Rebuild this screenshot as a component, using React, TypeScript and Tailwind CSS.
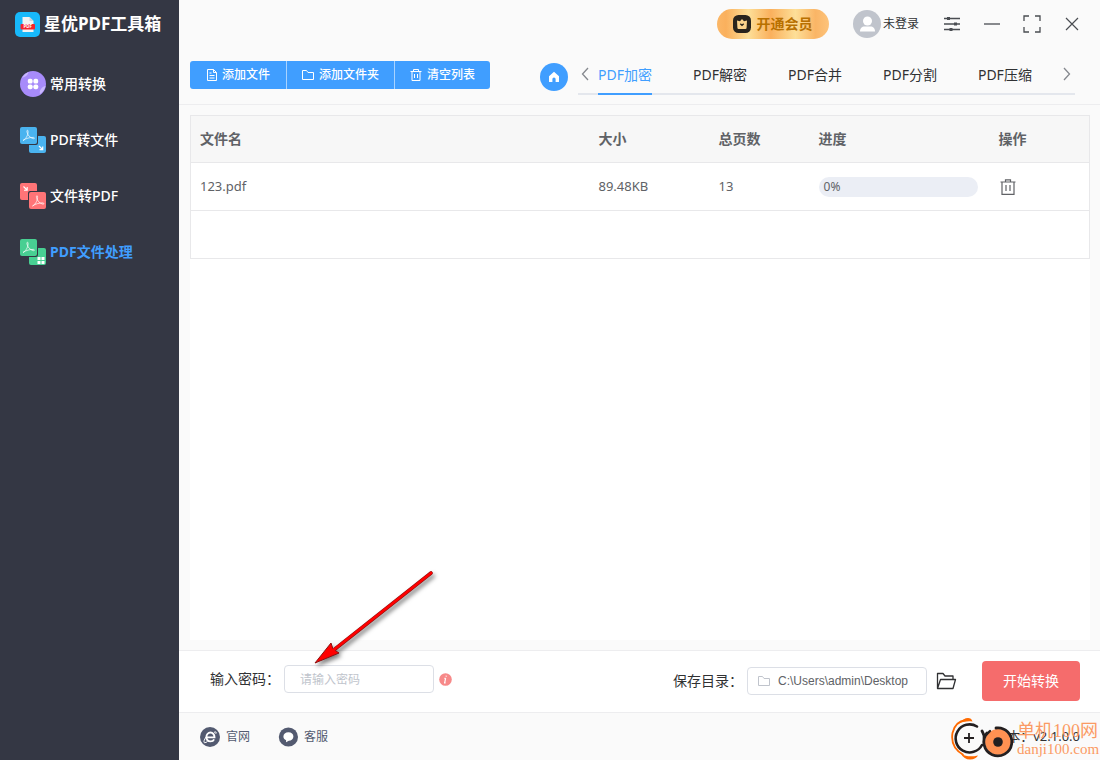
import type { ReactNode } from "react";

const tabs = ["PDF加密", "PDF解密", "PDF合并", "PDF分割", "PDF压缩"];
const files = [{ name: "123.pdf", size: "89.48KB", pages: 13, progress: 0 }];

const ACROBAT = "M0 10.5C3.500 8.500 5.500 4 5 .8 4.600-.4 3.600.4 4 2c.6 3 3 6 6.500 6.700 1.200.2 1.200-1.200 0-1.300C7 7.300 3 8.300 0 10.500z";

function App() {
  return (
    <div className="flex min-h-screen bg-[#fafafa] font-['Noto_Sans','Noto_Sans_CJK_SC',sans-serif] text-sm text-[#303133]">
      <Sidebar />
      <main className="relative flex min-w-0 flex-1 flex-col">
        <TitleBar />
        <Toolbar />
        <section className="flex flex-1 flex-col py-[10px] pr-[10px] pl-[11px]">
          <div className="flex-1 bg-white">
            <FileTable />
          </div>
        </section>
        <OptionsBar />
        <Footer />
        <Arrow />
      </main>
    </div>
  );
}

function Sidebar() {
  return (
    <aside className="w-[179px] shrink-0 bg-[#343744] text-white">
      <div className="flex h-12 items-center gap-1 pl-[15px]">
        <LogoIcon />
        <h1 className="whitespace-nowrap text-[17px] font-bold leading-6">星优PDF工具箱</h1>
      </div>
      <nav className="flex flex-col pt-2">
        <MenuItem icon={<CommonIcon />}>常用转换</MenuItem>
        <MenuItem icon={<PdfToFileIcon />}>PDF转文件</MenuItem>
        <MenuItem icon={<FileToPdfIcon />}>文件转PDF</MenuItem>
        <MenuItem icon={<PdfProcessIcon />} active>PDF文件处理</MenuItem>
      </nav>
    </aside>
  );
}

const MenuItem = ({ icon, active, children }: { icon: ReactNode; active?: boolean; children: ReactNode }) => {
  return (
    <a href="#" className={active ? "flex h-14 items-center gap-1 pl-5 font-bold text-[#409eff]" : "flex h-14 items-center gap-1 pl-5 font-medium"}>
      {icon}
      <span>{children}</span>
    </a>
  );
};

function TitleBar() {
  return (
    <header className="flex h-[47px] items-center justify-end pr-[19px]">
      <button className="flex h-[30px] w-28 items-center justify-center gap-[5px] rounded-full bg-[linear-gradient(90deg,#fbb767,#fab05d_8%,#fddf98_28%,#fab05d_48%,#fddf98_70%,#fab566_88%,#fdc37a)] text-sm font-bold text-[#b87000]">
        <VipIcon />
        开通会员
      </button>
      <button className="ml-6 flex items-center gap-[2px] text-xs">
        <AvatarIcon />
        未登录
      </button>
      <div className="ml-6 flex items-center gap-[22px] text-[#4a4d52]">
        <button aria-label="设置">
          <svg width="18" height="18" viewBox="0 0 18 18" fill="none" stroke="currentColor" strokeWidth="1.4">
            <path d="M1 3.500h16M1 9h16M1 14.500h16" />
            <path d="M5.500 2v3M12.500 7.500v3M8 13v3" strokeWidth="3" />
          </svg>
        </button>
        <button aria-label="最小化">
          <svg width="18" height="18" viewBox="0 0 18 18" stroke="currentColor" strokeWidth="1.3"><path d="M1 9h16" /></svg>
        </button>
        <button aria-label="最大化">
          <svg width="18" height="18" viewBox="0 0 18 18" fill="none" stroke="currentColor" strokeWidth="1.3">
            <path d="M1 6V1h5M12 1h5v5M17 12v5h-5M6 17H1v-5" />
          </svg>
        </button>
        <button aria-label="关闭">
          <svg width="18" height="18" viewBox="0 0 18 18" stroke="currentColor" strokeWidth="1.2"><path d="M3 3l12 12M15 3L3 15" /></svg>
        </button>
      </div>
    </header>
  );
}

function Toolbar() {
  return (
    <div className="flex items-center border-b border-[#ededef] pt-2 pb-[9px] pl-[11px]">
      <div className="flex h-7 shrink-0 divide-x divide-[#a9d3ff] overflow-hidden rounded-[3px] bg-[#409eff] text-xs font-medium text-white">
        <button className="flex items-center gap-1 px-4">
          <svg width="12" height="12" viewBox="0 0 12 12" fill="none" stroke="currentColor">
            <path d="M1.5.5h6l3 3v8h-9zM7.5.5v3h3M3.500 4h2M3.500 6.500h5M3.500 9h5" />
          </svg>
          添加文件
        </button>
        <button className="flex items-center gap-[5px] px-[15px]">
          <svg width="12" height="12" viewBox="0 0 12 12" fill="none" stroke="currentColor">
            <path d="M.5 1.500h4l1.500 2h5.500v7H.5z" />
          </svg>
          添加文件夹
        </button>
        <button className="flex items-center gap-[5px] px-[15px]">
          <svg width="12" height="12" viewBox="0 0 12 12" fill="none" stroke="currentColor">
            <path d="M.5 2.500h11M3.500 2.500v-2h5v2M2 2.500v9h8v-9M4.500 5v4M7.500 5v4" />
          </svg>
          清空列表
        </button>
      </div>
      <button aria-label="首页" className="mr-[10px] mb-1 ml-[50px] flex size-7 shrink-0 items-center justify-center self-end rounded-full bg-[#409eff] text-white">
        <svg width="12" height="12" viewBox="0 0 12 12" fill="currentColor">
          <path d="M6 .8l5 4.400v5.300a.6.600 0 0 1-.6.600H7.600V8a1.600 1.600 0 0 0-3.200 0v3.100H1.600A.6.600 0 0 1 1 10.500V5.200z" />
        </svg>
      </button>
      <div className="mr-[25px] flex h-10 min-w-0 flex-1 border-b-2 border-[#e4e7ed]">
        <button aria-label="上一页" className="w-5 shrink-0 text-[#85888e]">
          <svg width="14" height="14" viewBox="0 0 14 14" fill="none" stroke="currentColor" strokeWidth="1.3"><path d="M10 1L4.500 7l5.500 6" /></svg>
        </button>
        <nav className="-mb-[2px] flex min-w-0 flex-1 gap-[41px] overflow-hidden">
          {tabs.map((tab, index) => (
            <a
              key={tab}
              href="#"
              className={index === 0
                ? "shrink-0 border-b-2 border-[#409eff] leading-10 text-[#409eff]"
                : "shrink-0 leading-10"}
            >
              {tab}
            </a>
          ))}
        </nav>
        <button aria-label="下一页" className="w-5 shrink-0 text-[#85888e]">
          <svg width="20" height="14" viewBox="0 0 20 14" fill="none" stroke="currentColor" strokeWidth="1.3"><path d="M9 1l5.500 6L9 13" /></svg>
        </button>
      </div>
    </div>
  );
}

function FileTable() {
  return (
    <table className="w-full table-fixed border-collapse border border-[#e8e8ea] text-left text-[#606266]">
      <thead>
        <tr className="h-[47px] border-b border-[#e8e8ea] bg-[#f7f7f7]">
          <th className="pl-[9px] font-bold">文件名</th>
          <th className="w-[120px] pl-[9px] font-bold">大小</th>
          <th className="w-[100px] pl-[9px] font-bold">总页数</th>
          <th className="w-[180px] pl-[9px] font-bold">进度</th>
          <th className="w-[100px] pl-[9px] font-bold">操作</th>
        </tr>
      </thead>
      <tbody>
        {files.map((file) => (
          <tr key={file.name} className="h-12 border-b border-[#e8e8ea] text-[13px]">
            <td className="pl-[9px]">{file.name}</td>
            <td className="pl-[9px]">{file.size}</td>
            <td className="pl-[9px]">{file.pages}</td>
            <td className="pr-3 pl-[9px]">
              <div className="relative h-5 overflow-hidden rounded-full bg-[#ebeef5]">
                <div className="absolute inset-y-0 left-0 bg-[#409eff]" style={{ width: `${file.progress}%` }} />
                <span className="relative block pl-[5px] text-xs leading-5">{file.progress}%</span>
              </div>
            </td>
            <td className="pl-[10px]">
              <button aria-label="删除" className="block">
                <svg width="16" height="16" viewBox="0 0 16 16" fill="none" stroke="currentColor" strokeWidth="1.2">
                  <path d="M.5 3h15M5.500 3V.8h5V3M2 3v12.400h12V3M6 6v6M10 6v6" />
                </svg>
              </button>
            </td>
          </tr>
        ))}
        <tr className="h-12">
          <td colSpan={5} />
        </tr>
      </tbody>
    </table>
  );
}

function OptionsBar() {
  return (
    <div className="flex items-center border-y border-[#ededef] bg-white pt-[10px] pr-5 pb-[11px] pl-[31px]">
      <div className="flex items-center self-start pt-1">
        <label htmlFor="password" className="mr-1 shrink-0">输入密码：</label>
        <input id="password" placeholder="请输入密码" className="h-7 w-[150px] min-w-0 rounded border border-[#dcdfe6] bg-white px-[15px] text-xs outline-none placeholder:text-[#c0c4cc]" />
        <svg width="13" height="13" viewBox="0 0 13 13" className="ml-[5px] shrink-0">
          <circle cx="6.5" cy="6.5" r="6.300" fill="#f78989" />
          <path d="M7.300 2.600l-.2 1M6.600 5.200l-.9 4.600M5.400 5.300h1.200M5 9.900h1.600" stroke="#fff" strokeWidth="1.200" />
        </svg>
      </div>
      <label htmlFor="folder" className="mr-1 ml-auto shrink-0">保存目录：</label>
      <div className="relative">
        <input id="folder" readOnly defaultValue="C:\Users\admin\Desktop" className="h-7 w-[180px] rounded border border-[#dcdfe6] bg-white pr-[10px] pl-[30px] font-['Liberation_Sans',sans-serif] text-xs text-[#606266] outline-none" />
        <svg width="12" height="12" viewBox="0 0 12 12" fill="none" stroke="#c0c4cc" className="absolute top-2 left-[11px]">
          <path d="M.5 1.500h4l1.500 2h5.500v7H.5z" />
        </svg>
      </div>
      <button aria-label="打开目录" className="ml-[9px] text-[#303133]">
        <svg width="21" height="18" viewBox="0 0 21 18" fill="none" stroke="currentColor" strokeWidth="1.300" strokeLinejoin="round">
          <path d="M1.500 16.500V1.500h5.500l2 2.500h8v3M1.500 16.500L4.500 7.500h15l-2.500 9z" />
        </svg>
      </button>
      <button className="ml-[25px] h-10 w-[98px] shrink-0 rounded bg-[#f56c6c] text-sm text-white">开始转换</button>
    </div>
  );
}

function Footer() {
  return (
    <footer className="relative flex h-[47px] items-center pr-5 pl-[21px] text-xs text-[#535a70]">
      <a href="#" className="mr-7 flex items-center gap-[6px]">
        <svg width="20" height="20" viewBox="0 0 20 20" fill="none">
          <circle cx="10" cy="10" r="10" fill="#535a70" />
          <path d="M6.500 10.400h8c0-3-1.700-4.900-4-4.900S6.400 7.400 6.400 10s1.700 4.400 4.100 4.400c1.700 0 3-.8 3.600-2.100" stroke="#fff" strokeWidth="1.900" />
          <path d="M14 5.400c1.800-1 2.800-.6 1.800 1.400M6 10c-2 3-2.600 5.500-1.400 5.700.8.100 1.800-.4 2.800-1.100" stroke="#fff" strokeWidth="1" />
        </svg>
        官网
      </a>
      <a href="#" className="flex items-center gap-[6px]">
        <svg width="20" height="20" viewBox="0 0 20 20">
          <circle cx="10.400" cy="10" r="9.600" fill="#535a70" />
          <path d="M10.400 5.200c3 0 5 1.900 5 4.300s-2 4.200-4.600 4.200L8 15.200l.1-2C6.400 12.600 5.400 11.300 5.400 9.500c0-2.400 2-4.300 5-4.300z" fill="#fff" />
        </svg>
        客服
      </a>
      <span className="ml-auto text-[13px] text-[#303133]">版本：v2.1.0.0</span>
      <Watermark />
    </footer>
  );
}

// site badge that floats over the version number
function Watermark() {
  return (
    <div className="absolute right-0 bottom-0 flex h-[43px] items-center">
      <svg width="66" height="43" viewBox="0 0 66 43" fill="none">
        <path d="M15 3C8 4 3 9 1.500 16c-1.500 9 2 17 11 22" stroke="#ff6a00" strokeWidth="1.800" />
        <path d="M8 6.500C11 3 14 1 17 1c2 0 4 1 4.500 3.500C17 4 12 4.500 8 6.500zM10 37c5 2.500 10 3 17 1.500-1 2-4 4-8 4s-7-2-9-5.500z" fill="#ff6a00" />
        <path d="M26 9.500A14 14 0 1 0 31 28" stroke="#231f20" strokeWidth="2.600" strokeLinecap="round" />
        <path d="M18 16v10M13 21h10" stroke="#231f20" strokeWidth="1.800" />
        <circle cx="47" cy="25" r="13" fill="#ff9152" />
        <path d="M31 14c1 2 3 4 2 8M45 11a14 14 0 1 1-9 5" stroke="#231f20" strokeWidth="2.800" strokeLinecap="round" />
        <path d="M35 18l4-4" stroke="#231f20" strokeWidth="2.400" strokeLinecap="round" />
        <circle cx="47" cy="25" r="4.800" fill="#231f20" />
      </svg>
      <div className="w-[83px] whitespace-nowrap font-['Liberation_Serif','Noto_Sans_CJK_SC',serif] text-[#fa9a64]">
        <div className="text-lg leading-5">单机100网</div>
        <div className="text-[15px] leading-4">danji100.com</div>
      </div>
    </div>
  );
}

function Arrow() {
  return (
    <svg width="128" height="104" viewBox="0 0 128 104" className="pointer-events-none absolute bottom-[90px] left-[132px] drop-shadow-[2px_3px_2px_rgba(0,0,0,0.5)]">
      <path d="M120 7L24 83" stroke="#8c1010" strokeWidth="3.600" strokeLinecap="round" />
      <path d="M4 97l16-20 2 6 6 4z" fill="#f00" stroke="#8c1010" />
      <path d="M120 7L20 86" stroke="#f00" strokeWidth="2.600" strokeLinecap="round" />
    </svg>
  );
}

function LogoIcon() {
  return (
    <svg width="25" height="25" viewBox="0 0 25 25">
      <rect width="25" height="25" rx="5" fill="#17b9fb" />
      <path d="M7.500 5h7l4 4v11h-11z" fill="#f2f2f2" />
      <path d="M14.500 5v4h4z" fill="#cfd4d8" />
      <rect x="5.500" y="12" width="14.500" height="5.500" rx="1" fill="#f5252d" />
      <text x="12.700" y="16.400" textAnchor="middle" fontSize="4.500" fontWeight="700" fill="#fff">PDF</text>
    </svg>
  );
}

function CommonIcon() {
  return (
    <svg width="26" height="26" viewBox="0 0 26 26">
      <circle cx="13" cy="13" r="13" fill="#a78bfa" />
      <path d="M2 6.500A13 13 0 0 1 8.500 1C8 4 5 6.500 2 6.500zM25.500 15a13 13 0 0 1-5.500 8c-1-3.500 2-7.500 5.500-8z" fill="#c9b8fd" />
      <g fill="#fff">
        <rect x="7.800" y="7.800" width="4.800" height="4.800" rx="1.900" />
        <rect x="13.400" y="7.800" width="4.800" height="4.800" rx="1.900" />
        <rect x="7.800" y="13.400" width="4.800" height="4.800" rx="1.900" />
        <rect x="13.400" y="13.400" width="4.800" height="4.800" rx="1.900" />
      </g>
    </svg>
  );
}

function PdfToFileIcon() {
  return (
    <svg width="26" height="26" viewBox="0 0 26 26" fill="none" stroke="#fff">
      <rect x="9" y="9" width="17" height="17" rx="2" fill="#4ab3ef" stroke="none" />
      <rect x="-1" y="-1" width="19" height="19" rx="2" fill="#343744" stroke="none" />
      <rect width="17" height="17" rx="2" fill="#4ab3ef" stroke="none" />
      <path d={ACROBAT} transform="translate(3 3)" strokeWidth=".7" />
      <path d="M19 19l3.500 3.500M22.700 19.500v3.200h-3.200" strokeWidth="1.200" />
    </svg>
  );
}

function FileToPdfIcon() {
  return (
    <svg width="26" height="26" viewBox="0 0 26 26" fill="none" stroke="#fff">
      <rect width="17" height="17" rx="2" fill="#ff7477" stroke="none" />
      <rect x="8" y="8" width="19" height="19" rx="2" fill="#343744" stroke="none" />
      <rect x="9" y="9" width="17" height="17" rx="2" fill="#ff7477" stroke="none" />
      <path d={ACROBAT} transform="translate(12.500 12.500)" strokeWidth=".7" />
      <path d="M3.500 3.500L7 7M7.200 4v3.200H4" strokeWidth="1.100" />
    </svg>
  );
}

function PdfProcessIcon() {
  return (
    <svg width="26" height="26" viewBox="0 0 26 26" fill="none" stroke="#fff">
      <rect x="9" y="9" width="17" height="17" rx="2" fill="#48cf92" stroke="none" />
      <rect x="-1" y="-1" width="19" height="19" rx="2" fill="#343744" stroke="none" />
      <rect width="17" height="17" rx="2" fill="#48cf92" stroke="none" />
      <path d={ACROBAT} transform="translate(3 3)" strokeWidth=".7" />
      <path d="M17.500 18h3v3h-3zM21.500 18h3v3h-3zM17.500 22h3v3h-3zM21.500 22h3v3h-3z" fill="#fff" stroke="none" />
    </svg>
  );
}

function VipIcon() {
  return (
    <svg width="18" height="18" viewBox="0 0 18 18">
      <rect width="18" height="18" rx="5.500" fill="#29241d" />
      <path d="M4 5.500l3 .8L9 4l2 2.300 3-.8-.4 7.300a1.200 1.200 0 0 1-1.200 1.200H5.600a1.200 1.200 0 0 1-1.200-1.200z" fill="#fbd38c" />
      <path d="M7.300 8.700L9 10.400l1.700-1.700" fill="none" stroke="#29241d" strokeWidth="1.300" />
    </svg>
  );
}

function AvatarIcon() {
  return (
    <svg width="28" height="28" viewBox="0 0 28 28">
      <circle cx="14" cy="14" r="14" fill="#c0c4cc" />
      <circle cx="14.500" cy="11" r="4.500" fill="#fff" />
      <path d="M7 21.500c0-3.500 2-5 4.500-5h6c2.500 0 4.500 1.500 4.500 5z" fill="#fff" />
    </svg>
  );
}

export default App;
